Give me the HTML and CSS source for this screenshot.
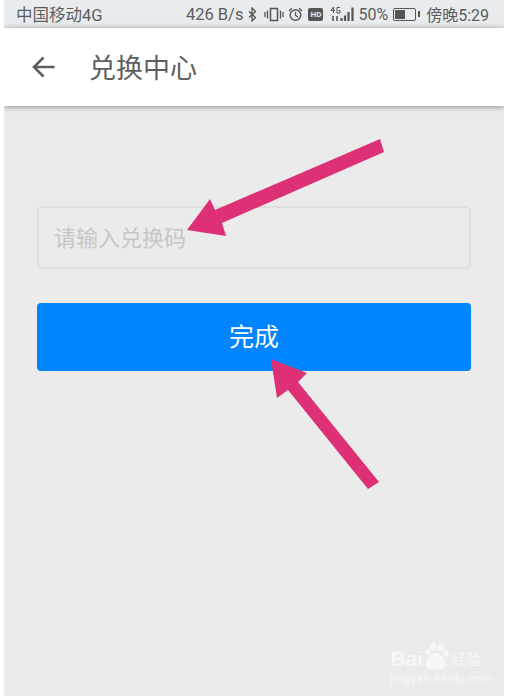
FILE: index.html
```html
<!DOCTYPE html>
<html>
<head>
<meta charset="UTF-8"/>
<title>兑换中心</title>
<link rel="stylesheet" href="styles.css">
</head>
<body>
<div class="screen">
	<div class="status-bar">
		<span class="carrier">中国移动4G</span>
		<div class="status-right">
			<span class="speed">426 B/s</span>
			<svg class="ic bt" width="9" height="15" viewBox="0 0 9 15"><path d="M1 4.500l6.500 6-3.500 3.500V1l3.500 3.500-6.500 6" fill="none" stroke="#555" stroke-width="1.300"/></svg>
			<svg class="ic vib" width="20" height="15" viewBox="0 0 20 15"><rect x="6.500" y="1.500" width="7" height="12" fill="none" stroke="#555" stroke-width="1.500"/><path d="M3.500 3.500v8M1 5v5M16.500 3.500v8M19 5v5" stroke="#555" stroke-width="1.300"/></svg>
			<svg class="ic alarm" width="15" height="15" viewBox="0 0 15 15"><circle cx="7.500" cy="8" r="5.300" fill="none" stroke="#555" stroke-width="1.500"/><path d="M7.500 4.800V8.300l2.400 1.600M1 4L3.800 1.200M14 4L11.200 1.200" fill="none" stroke="#555" stroke-width="1.300"/></svg>
			<span class="hd">HD</span>
			<svg class="ic signal" width="24" height="17" viewBox="0 0 24 17"><path d="M11.500 15v-3M15 15V9.500M18.500 15V6M22.500 15V1.500" stroke="#555" stroke-width="2.200"/><path d="M3 10v5M7 10v5" stroke="#555" stroke-width="1.600"/><path d="M1 4.500L3.500 1v6M1 4.500h4M10 1.500H7v5.500h3V4.500H8.500" fill="none" stroke="#555" stroke-width="1"/></svg>
			<span class="pct">50%</span>
			<div class="battery"><div class="battery-fill"></div></div>
			<div class="battery-tip"></div>
			<span class="time">傍晚5:29</span>
		</div>
	</div>
	<div class="title-bar">
		<svg class="back" width="23" height="22" viewBox="0 0 23 22"><path d="M22.500 11H3M11.500 1.500L2 11l9.500 9.500" fill="none" stroke="#5f5f5f" stroke-width="2.600"/></svg>
		<span class="title">兑换中心</span>
	</div>
	<div class="content">
		<div class="code-input">请输入兑换码</div>
		<div class="done-btn">完成</div>
		<div class="watermark">
			<div class="wm-logo">
				<span>Bai</span>
				<svg width="26" height="29" viewBox="0 0 35 38"><g fill="#fff"><ellipse cx="7" cy="13" rx="3.500" ry="4.500"/><ellipse cx="14" cy="6" rx="4" ry="5.500"/><ellipse cx="24" cy="7" rx="4" ry="5.500"/><ellipse cx="31" cy="15" rx="3.500" ry="4.500"/><path d="M17 14c6 0 13 8 13 15 0 6-5 8-13 8S4 35 4 29c0-7 7-15 13-15z"/></g></svg>
				<span class="wm-cn">经验</span>
			</div>
			<div class="wm-url">jingyan.baidu.com</div>
		</div>
	</div>
	<svg class="arrows" width="500" height="696" viewBox="0 0 500 696">
		<path d="M376 139L380 152 218 223 222 236 183 230 206 199 211 210z" fill="#de3175"/>
		<path d="M267 359L303 373 294 382 375 482 364 489 284 390 273 398z" fill="#de3175"/>
	</svg>
</div>
</body>
</html>
```
FILE: styles.css
```css
html,body{
	margin:0;
	padding:0;
	background:#fff;
}
body{
	font-family:"Roboto","Noto Sans CJK SC",sans-serif;
}
.screen{
	position:relative;
	width:500px;
	height:696px;
	margin-left:4px;
	display:flex;
	flex-direction:column;
	background:#ebebeb;
	overflow:hidden;
}
.status-bar{
	height:28px;
	background:#e9ecef;
	display:flex;
	align-items:center;
	justify-content:space-between;
	padding:0 15px 0 12px;
	font-size:16.5px;
	color:#5c5c5c;
	flex:none;
}
.status-right{
	display:flex;
	align-items:center;
}
.bt{
	margin-left:5px;
}
.vib{
	margin-left:7px;
}
.alarm{
	margin-left:4px;
}
.hd{
	width:15px;
	height:13px;
	margin-left:5px;
	background:#555;
	color:#e9ecef;
	border-radius:2px;
	font-size:8px;
	font-weight:bold;
	line-height:13px;
	text-align:center;
}
.signal{
	margin-left:7px;
}
.pct{
	font-size:16px;
	margin-left:4px;
}
.battery{
	width:23px;
	height:13px;
	border:1px solid #555;
	border-radius:2px;
	padding:1px;
	box-sizing:border-box;
	margin-left:5px;
}
.battery-fill{
	width:50%;
	height:100%;
	background:#555;
}
.battery-tip{
	width:2px;
	height:6px;
	background:#555;
	margin-left:2px;
}
.time{
	font-size:16px;
	margin-left:6px;
}
.title-bar{
	height:78px;
	background:#fff;
	display:flex;
	align-items:center;
	padding-left:28px;
	box-shadow:0 1px 6px rgba(0,0,0,.4);
	position:relative;
	flex:none;
}
.title{
	font-size:27px;
	color:#5f5f5f;
	margin-left:34px;
	margin-top:-2px;
}
.content{
	flex:1;
	position:relative;
	padding:100px 33px 0 33px;
}
.code-input{
	height:63px;
	border:2px solid #dfdfdf;
	border-radius:5px;
	box-sizing:border-box;
	font-size:22px;
	color:#c6c6c6;
	line-height:61px;
	padding-left:15px;
}
.done-btn{
	height:68px;
	margin-top:34px;
	background:#0084ff;
	border-radius:4px;
	color:#fff;
	font-size:25px;
	line-height:70px;
	text-align:center;
}
.watermark{
	position:absolute;
	right:11px;
	bottom:10px;
	color:#fff;
	opacity:.6;
}
.wm-logo{
	display:flex;
	align-items:flex-end;
	font-family:"Liberation Sans",sans-serif;
	font-size:21px;
	font-weight:bold;
	line-height:24px;
}
.wm-cn{
	font-family:"Noto Sans CJK SC",sans-serif;
	font-size:15px;
	font-weight:normal;
	margin-left:2px;
}
.wm-url{
	font-size:12px;
	line-height:13px;
	margin-top:2px;
	letter-spacing:.3px;
}
.arrows{
	position:absolute;
	left:0;
	top:0;
	pointer-events:none;
}
```
